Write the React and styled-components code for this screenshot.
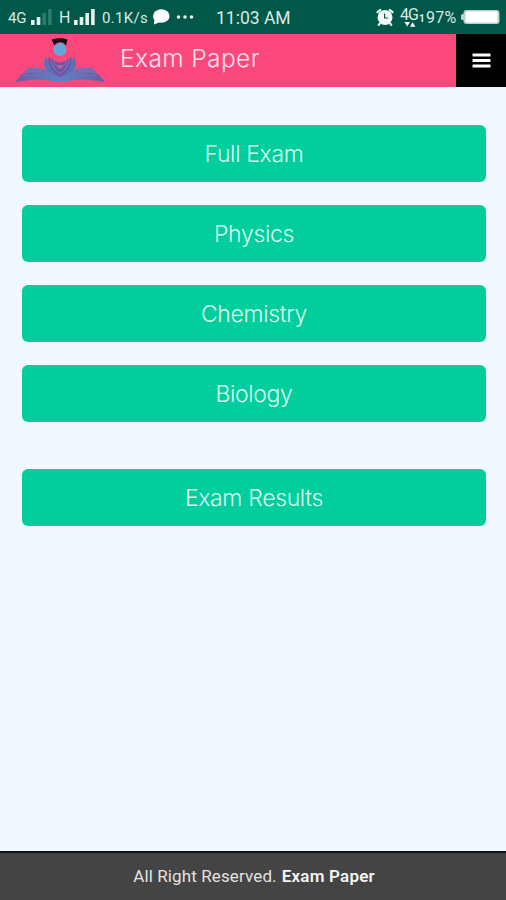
import React from 'react';
import styled, { createGlobalStyle } from 'styled-components';

const statusGreen = '#015849';
const pink = '#fb487c';
const green = '#02cd9c';
const textFont = 'Inter, Roboto, sans-serif';
const statusFont = 'Roboto, "Liberation Sans", sans-serif';

const GlobalStyle = createGlobalStyle`
  * {
    box-sizing: border-box;
  }

  body {
    margin: 0;
  }
`;

const Screen = styled.div`
  display: flex;
  flex-direction: column;
  height: 100vh;
  overflow: hidden;
  font-family: ${textFont};
  background: #f1f7fe;
`;

const StatusBar = styled.div`
  display: flex;
  align-items: center;
  flex: none;
  height: 34px;
  padding-left: 8px;
  background: ${statusGreen};
  color: #d9e9e6;
  font-family: ${statusFont};

  svg {
    display: block;
    flex: none;
  }
`;

const StatusText = styled.span`
  flex: none;
  width: ${({ $width }) => $width}px;
  margin-left: ${({ $gap }) => $gap || 0}px;
  padding-top: 2px;
  font-size: ${({ $size }) => $size || 15}px;
  line-height: 20px;
  letter-spacing: ${({ $spacing }) => $spacing || 0}px;
  white-space: nowrap;
`;

const Clock = styled(StatusText)`
  margin: 0 85px 0 22px;
`;

const Network = styled.span`
  display: flex;
  flex-direction: column;
  align-items: flex-start;
  flex: none;
  width: 19px;
  margin-left: 6px;
  font-size: 16px;
  line-height: 14px;
  letter-spacing: -1px;
`;

const Slot = styled.span`
  flex: none;
  width: 7px;
  padding-top: 2px;
  font-size: 10px;
  font-weight: 700;
`;

const Header = styled.header`
  display: flex;
  flex: none;
  height: 53px;
  background: ${pink};
`;

const Title = styled.h1`
  flex: 1;
  margin: 0;
  padding: 9px 0 0 13px;
  color: #ffe3ec;
  font-size: 24.5px;
  font-weight: 300;
  line-height: 30px;
  letter-spacing: 0.4px;
`;

const MenuButton = styled.button`
  display: flex;
  align-items: center;
  justify-content: center;
  width: 50px;
  padding: 0;
  border: 0;
  background: #000;
`;

const Main = styled.main`
  display: flex;
  flex: 1;
  flex-direction: column;
  gap: 23px;
  padding: 38px 20px 0 22px;
`;

const ExamButton = styled.button`
  height: 57px;
  margin: ${({ $separate }) => ($separate ? '24px 0 0' : 0)};
  padding: 1px 0 0;
  border: 0;
  border-radius: 6px;
  background: ${green};
  color: #d6fbf2;
  font-family: ${textFont};
  font-size: 23px;
  font-weight: 300;
  letter-spacing: -0.35px;
`;

const Footer = styled.footer`
  display: flex;
  align-items: center;
  justify-content: center;
  gap: 5px;
  flex: none;
  height: 49px;
  padding: 0 0 1px 2px;
  border-top: 2px solid #111;
  background: #444;
  color: #e2e2e2;
  font-family: ${statusFont};
  font-size: 17px;
  letter-spacing: 0.12px;
`;

const Brand = styled.strong`
  color: #f4f4f4;
  font-weight: 600;
  letter-spacing: 0.2px;
`;

const Signal = ({ strength }) => (
  <svg width="22" height="18" viewBox="0 0 22 18">
    {[5, 8, 12, 16].map((height, i) => (
      <rect
        key={height}
        x={i * 5.7}
        y={17 - height}
        width="3.6"
        height={height}
        fill={i < strength ? '#e3f2ef' : '#2a7c6c'}
      />
    ))}
  </svg>
);

const Bubble = () => (
  <svg width="18" height="18" viewBox="0 0 18 18" fill="#fff">
    <ellipse cx="9.3" cy="8" rx="8.3" ry="6.8" />
    <path d="M2.5 10 2 16.5 8 14Z" />
  </svg>
);

const Dots = () => (
  <svg width="18" height="6" viewBox="0 0 18 6" fill="#e3f2ef">
    <circle cx="2.5" cy="3" r="1.8" />
    <circle cx="9" cy="3" r="1.8" />
    <circle cx="15.5" cy="3" r="1.8" />
  </svg>
);

const Alarm = () => (
  <svg width="18" height="18" viewBox="0 0 18 18" fill="none" strokeLinecap="round">
    <path
      d="M1.5 4.2 4.2 2M16.5 4.2 13.8 2M3.8 15.6 2.8 16.8M14.2 15.6l1 1.2"
      stroke="#f2faf8"
      strokeWidth="2.2"
    />
    <circle cx="9" cy="9.4" r="7.5" fill="#f2faf8" />
    <path d="M8.6 6v4h3" stroke={statusGreen} strokeWidth="1.2" />
  </svg>
);

const DataArrows = () => (
  <svg width="16" height="5" viewBox="0 0 16 5" fill="#fff">
    <path d="M4.5 0h5.5L7.2 4.6ZM10 4.8 12.6.3 15.4 4.8Z" />
  </svg>
);

const Battery = () => (
  <svg width="39" height="16" viewBox="0 0 39 16">
    <rect x="0" y="5" width="4" height="6" rx="1.5" fill="#b9d3cd" />
    <rect x="2.5" y="1" width="36" height="14" rx="3" fill="#b9d3cd" />
    <rect x="4.5" y="2.5" width="32" height="11" rx="1.5" fill="#fff" />
  </svg>
);

// scholar rising from an open book
const Logo = () => (
  <svg width="107" height="53" viewBox="0 0 107 53">
    <defs>
      <linearGradient id="page" x1="0" x2="1">
        <stop offset="0" stopColor="#6c5a9c" />
        <stop offset="0.5" stopColor="#5487d2" />
        <stop offset="1" stopColor="#6c5a9c" />
      </linearGradient>
    </defs>
    <path d="M24 38 28 34Q45 32 60 43Q75 32 92 34L96 38 90 42 60 46 30 42Z" fill="#6f70b5" />
    <path d="M15 48.5 22 39.5Q46 35 60 44Q74 35 98 39.5L105.5 48.5Q80 43 66 47.5H54Q40 43 15 48.5Z" fill="url(#page)" />
    <path
      d="M21 42Q44 39 58 46.5M99 42Q76 39 62 46.5M27 37Q45 36 59 44M93 37Q75 36 61 44"
      fill="none"
      stroke="#8b6ba5"
      strokeWidth="0.7"
    />
    <path d="M46 22Q41 33 49 38Q55 40 58 43Q50 34 46 22ZM74 22Q79 33 71 38Q65 40 62 43Q70 34 74 22Z" fill="#5573b8" />
    <path d="M48.5 23Q47 36 60 43Q73 36 71.5 23L65 27 60 29 55 27Z" fill="#6559a8" />
    <path
      d="M50 26Q53 35 60 40Q67 35 70 26M53 25Q54 31 60 35Q66 31 67 25"
      fill="none"
      stroke="#a46baa"
      strokeWidth="0.9"
    />
    <path d="M57 31h6L60 35Z" fill="#c0609c" />
    <circle cx="60" cy="15.5" r="6.4" fill="#65a6dc" />
    <path d="M51.5 5.5Q60 2.5 67.5 5.5L66 11.5 63.5 9Q60 7.5 56 9.5L54.5 11.5Z" fill="#14101a" />
  </svg>
);

const MenuIcon = () => (
  <svg width="19" height="17" viewBox="0 0 19 17" fill="#fff">
    <rect x="0.5" y="1.5" width="18" height="3" rx="0.5" />
    <rect x="0.5" y="7" width="18" height="3" rx="0.5" />
    <rect x="0.5" y="12.5" width="18" height="3" rx="0.5" />
  </svg>
);

export default () => (
  <Screen>
    <GlobalStyle />
    <StatusBar>
      <StatusText $width={23} $spacing={-0.3}>4G</StatusText>
      <Signal strength={2} />
      <StatusText $width={15} $gap={6} $size={16}>H</StatusText>
      <Signal strength={4} />
      <StatusText $width={50} $gap={6} $spacing={0.3}>0.1K/s</StatusText>
      <Bubble />
      <StatusText $width={6} />
      <Dots />
      <Clock $width={75} $size={17.5}>11:03 AM</Clock>
      <Alarm />
      <Network>
        4G
        <DataArrows />
      </Network>
      <Slot>1</Slot>
      <StatusText $width={35} $size={16} $spacing={0.2}>97%</StatusText>
      <Battery />
    </StatusBar>
    <Header>
      <Logo />
      <Title>Exam Paper</Title>
      <MenuButton aria-label="Menu">
        <MenuIcon />
      </MenuButton>
    </Header>
    <Main>
      <ExamButton>Full Exam</ExamButton>
      <ExamButton>Physics</ExamButton>
      <ExamButton>Chemistry</ExamButton>
      <ExamButton>Biology</ExamButton>
      <ExamButton $separate>Exam Results</ExamButton>
    </Main>
    <Footer>
      <span>All Right Reserved.</span>
      <Brand>Exam Paper</Brand>
    </Footer>
  </Screen>
);
